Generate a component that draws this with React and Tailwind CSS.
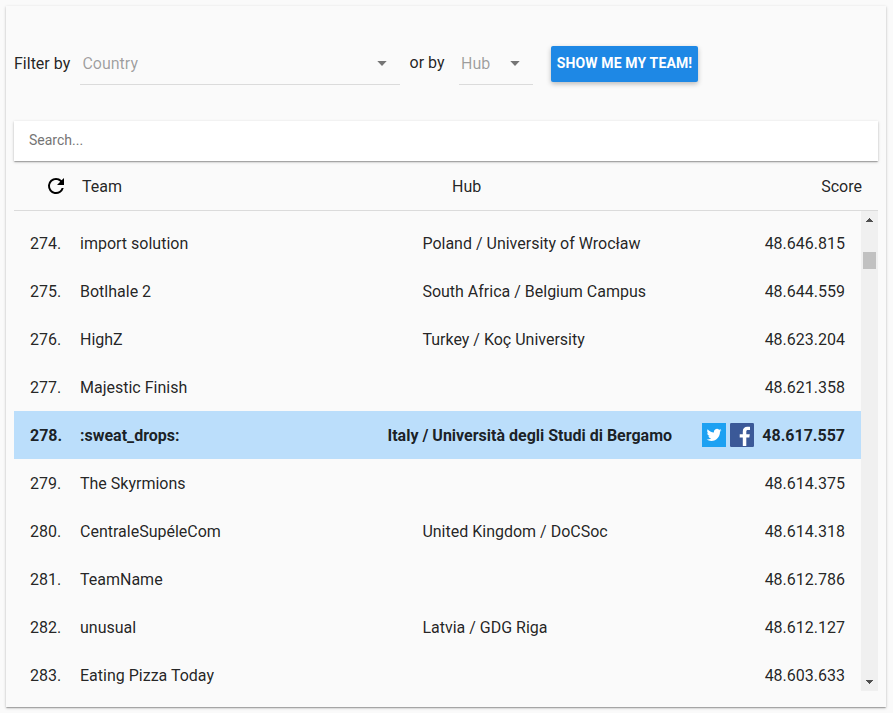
const rows = [
  { rank: 274, team: "import solution", hub: "Poland / University of Wrocław", score: "48.646.815" },
  { rank: 275, team: "Botlhale 2", hub: "South Africa / Belgium Campus", score: "48.644.559" },
  { rank: 276, team: "HighZ", hub: "Turkey / Koç University", score: "48.623.204" },
  { rank: 277, team: "Majestic Finish", hub: "", score: "48.621.358" },
  { rank: 278, team: ":sweat_drops:", hub: "Italy / Università degli Studi di Bergamo", score: "48.617.557", mine: true },
  { rank: 279, team: "The Skyrmions", hub: "", score: "48.614.375" },
  { rank: 280, team: "CentraleSupéleCom", hub: "United Kingdom / DoCSoc", score: "48.614.318" },
  { rank: 281, team: "TeamName", hub: "", score: "48.612.786" },
  { rank: 282, team: "unusual", hub: "Latvia / GDG Riga", score: "48.612.127" },
  { rank: 283, team: "Eating Pizza Today", hub: "", score: "48.603.633" },
];

function Caret({ className }) {
  return (
    <svg className={className} width="10" height="5" viewBox="0 0 10 5" aria-hidden="true">
      <path d="M0.3 0h9.4L5 5z" fill="#757575" />
    </svg>
  );
}

function TwitterIcon() {
  return (
    <svg className="block shrink-0" width="24" height="24" viewBox="0 0 24 24" aria-label="Twitter">
      <rect width="24" height="24" fill="#1da1f2" />
      <path
        transform="translate(4.6 4.4) scale(.62)"
        fill="#fff"
        d="M23.95 4.57a10 10 0 0 1-2.82.77 4.96 4.96 0 0 0 2.16-2.72c-.95.55-2 .95-3.13 1.18a4.92 4.92 0 0 0-8.38 4.48C7.69 8.1 4.07 6.13 1.64 3.16a4.82 4.82 0 0 0-.67 2.48c0 1.71.87 3.21 2.19 4.1a4.9 4.9 0 0 1-2.23-.62v.06a4.92 4.92 0 0 0 3.95 4.83 5 5 0 0 1-2.21.08 4.94 4.94 0 0 0 4.6 3.42A9.87 9.87 0 0 1 0 19.54a13.99 13.99 0 0 0 7.55 2.21c9.05 0 14-7.5 14-13.98 0-.21 0-.42-.02-.63a9.94 9.94 0 0 0 2.46-2.55z"
      />
    </svg>
  );
}

function FacebookIcon() {
  return (
    <svg className="block shrink-0" width="24" height="24" viewBox="0 0 24 24" aria-label="Facebook">
      <rect width="24" height="24" rx="1.3" fill="#3b5998" />
      <path fill="#fff" d="M12.8 23v-8.4H9.7v-3.4h3.1V8.4c0-3 1.8-4.6 4.5-4.6 1.3 0 2.4.1 2.7.1v3.2h-1.9c-1.5 0-1.8.7-1.8 1.7v2.4h3.5l-.5 3.4h-3V23z" />
    </svg>
  );
}

function Row({ row }) {
  return (
    <div className={row.mine ? "flex h-12 shrink-0 items-center bg-[#bbdefb] px-4 font-bold" : "flex h-12 shrink-0 items-center px-4"}>
      <div className="w-[50px] shrink-0 pt-0.5">{row.rank}.</div>
      <div className={row.mine ? "w-[307.5px] shrink-0 pt-0.5" : "w-[342.4px] shrink-0 pt-0.5"}>{row.team}</div>
      <div className="flex-1 pt-0.5 whitespace-nowrap">{row.hub}</div>
      {row.mine && (
        <div className="mr-2 flex gap-1">
          <TwitterIcon />
          <FacebookIcon />
        </div>
      )}
      <div className="pt-0.5 text-right">{row.score}</div>
    </div>
  );
}

export default function App() {
  return (
    <div className="h-[713px] w-[893px] overflow-hidden bg-[#fafafa] p-1.5 font-[Roboto,sans-serif] text-base leading-6 text-black/87">
      <div className="flex h-[701px] w-[880px] flex-col px-2 shadow-[0_1px_3px_0_rgba(0,0,0,0.2),0_1px_1px_0_rgba(0,0,0,0.14),0_2px_1px_-1px_rgba(0,0,0,0.12)]">
        <div className="flex h-[115px] shrink-0 items-start pt-10">
          <div className="mt-1.5 w-[66px] whitespace-nowrap">Filter by</div>
          <div className="flex h-[39px] w-80 items-start border-b border-black/12 pt-1.5 pr-[13px] pl-[2.4px]">
            <span className="flex-1 text-black/38">Country</span>
            <Caret className="mt-[9px]" />
          </div>
          <div className="mt-[5px] ml-[9.6px] w-[49.4px] whitespace-nowrap">or by</div>
          <div className="flex h-[39px] w-[74px] items-start border-b border-black/12 pt-1.5 pr-[13px] pl-0.5">
            <span className="flex-1 text-black/38">Hub</span>
            <Caret className="mt-[9px]" />
          </div>
          <button className="ml-[18px] flex h-9 w-[147px] justify-center rounded-[2px] bg-[#1e88e5] pt-px text-sm leading-8 font-bold tracking-[0.01em] whitespace-nowrap text-white shadow-[0_2px_5px_0_rgba(0,0,0,0.26)]">
            SHOW ME MY TEAM!
          </button>
        </div>

        <input
          className="h-10 shrink-0 bg-white pr-4 pb-[2px] pl-[15px] text-sm shadow-[0_1px_3px_0_rgba(0,0,0,0.2),0_1px_1px_0_rgba(0,0,0,0.14),0_2px_1px_-1px_rgba(0,0,0,0.12)] outline-none placeholder:text-[#757575]"
          placeholder="Search..."
        />

        <div className="flex h-[50px] shrink-0 items-center border-b border-black/12 pr-4">
          <div className="flex w-[68px] pl-[30px]">
            <svg width="24" height="24" viewBox="0 0 24 24" aria-label="Refresh">
              <path d="M17.65 6.35A7.958 7.958 0 0 0 12 4a8 8 0 1 0 7.73 10h-2.08A5.99 5.99 0 0 1 12 18c-3.31 0-6-2.69-6-6s2.69-6 6-6c1.66 0 3.14.69 4.22 1.78L13 11h7V4l-2.35 2.35z" />
            </svg>
          </div>
          <div className="w-[370px] pt-0.5">Team</div>
          <div className="flex-1 pt-0.5">Hub</div>
          <div className="pt-0.5">Score</div>
        </div>

        <div className="flex h-[480px] shrink-0">
          <div className="flex flex-1 flex-col overflow-hidden pt-2">
            {rows.map((row) => (
              <Row key={row.rank} row={row} />
            ))}
          </div>
          <div className="flex w-[17px] flex-col items-center bg-[#f0f0f0]">
            <svg width="17" height="17" viewBox="0 0 17 17" shapeRendering="crispEdges" aria-hidden="true">
              <path d="M8 7h1v1h1v1h1v1h1v1H5v-1h1V9h1V8h1z" fill="#505050" />
            </svg>
            <div className="mt-[24px] h-[17px] w-[13px] bg-[#c1c1c1]" />
            <div className="flex-1" />
            <svg width="17" height="17" viewBox="0 0 17 17" shapeRendering="crispEdges" aria-hidden="true">
              <path d="M5 6h7v1h-1v1h-1v1H9v1H8V9H7V8H6V7H5z" fill="#505050" />
            </svg>
          </div>
        </div>
      </div>
    </div>
  );
}
